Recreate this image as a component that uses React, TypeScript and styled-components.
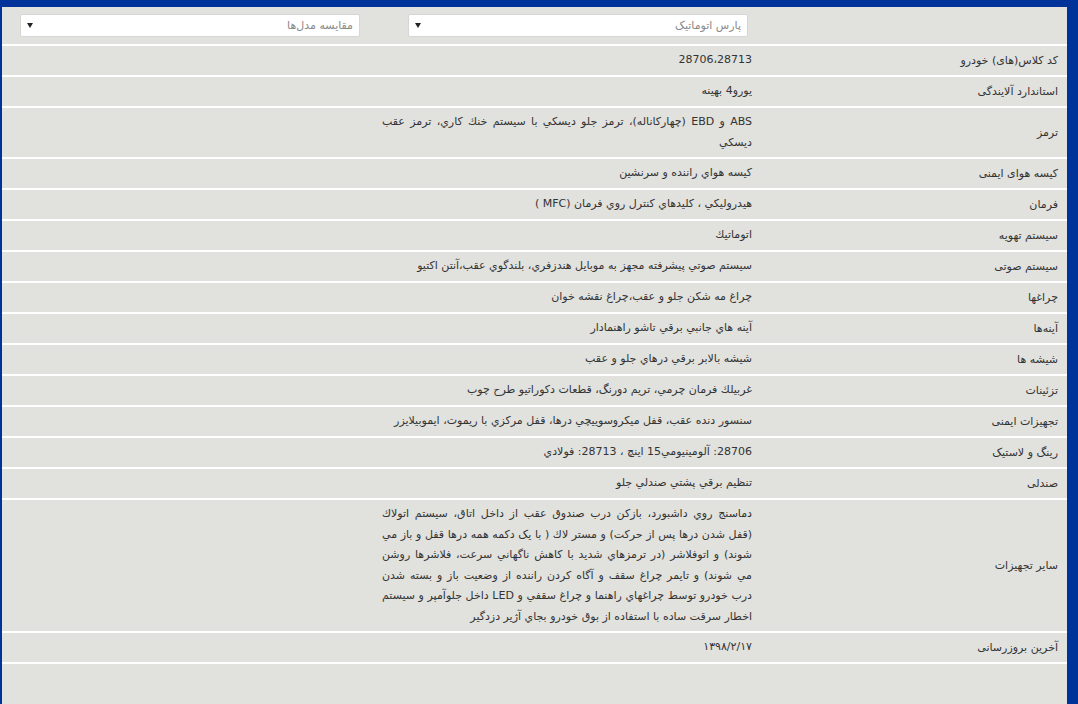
import styled, { createGlobalStyle } from 'styled-components';

const Global = createGlobalStyle`
  html, body { margin: 0; padding: 0; background: #003399; }
  body { font-family: "DejaVu Sans", "Liberation Sans", sans-serif; }
`;

const Frame = styled.div`
  margin: 7px 11px 0 2px;
  background: #e1e1dd;
  height: 697px;
  overflow: hidden;
  direction: rtl;
`;

const Row = styled.div<{ $header?: boolean }>`
  display: grid;
  grid-template-columns: 315px 370px 1fr;
  border-bottom: 2px solid #ffffff;
  min-height: ${p => (p.$header ? '37px' : '29px')};
  font-size: 11px;
  color: #333;
`;

const Label = styled.div`
  display: flex;
  align-items: center;
  padding: 0 9px;
`;

const Value = styled.div`
  padding: 4px 0;
  line-height: 20.5px;
  text-align: justify;
  text-align-last: right;
  display: flex;
  align-items: center;
`;

const SelectCell = styled.div<{ $pad: string }>`
  padding: ${p => p.$pad};
  display: flex;
  align-items: center;
`;

const Select = styled.div<{ $w: number }>`
  width: ${p => p.$w}px;
  height: 23px;
  background: #fff;
  border: 1px solid #d6d6d6;
  border-radius: 2px;
  display: flex;
  align-items: center;
  justify-content: space-between;
  padding: 0 6px;
  box-sizing: border-box;
  color: #8a8a8a;
  font-size: 11px;
`;

const Arrow = styled.span`
  width: 0; height: 0;
  border-left: 3.5px solid transparent;
  border-right: 3.5px solid transparent;
  border-top: 5px solid #222;
`;

const rows: [string, string][] = [
  ['کد کلاس(های) خودرو', '28706،28713'],
  ['استاندارد آلایندگی', 'یورو4 بهینه'],
  ['ترمز', 'ABS و EBD (چهارکاناله)، ترمز جلو ديسكي با سيستم خنك كاري، ترمز عقب ديسكي'],
  ['کیسه هوای ایمنی', 'كيسه هواي راننده و سرنشين'],
  ['فرمان', 'هيدروليكي ، كليدهاي كنترل روي فرمان (MFC )'],
  ['سیستم تهویه', 'اتوماتيك'],
  ['سیستم صوتی', 'سيستم صوتي پيشرفته مجهز به موبايل هندزفري، بلندگوي عقب،آنتن اكتيو'],
  ['چراغها', 'چراغ مه شكن جلو و عقب،چراغ نقشه خوان'],
  ['آینه‌ها', 'آينه هاي جانبي برقي تاشو راهنمادار'],
  ['شیشه ها', 'شيشه بالابر برقي درهاي جلو و عقب'],
  ['تزئینات', 'غربيلك فرمان چرمي، تريم دورنگ، قطعات دكوراتيو طرح چوب'],
  ['تجهیزات ایمنی', 'سنسور دنده عقب، قفل ميكروسوييچي درها، قفل مركزي با ريموت، ايموبيلايزر'],
  ['رینگ و لاستیک', '28706: آلومينيومي15 اينچ ، 28713: فولادي'],
  ['صندلی', 'تنظيم برقي پشتي صندلي جلو'],
  ['سایر تجهیزات', 'دماسنج روي داشبورد، بازكن درب صندوق عقب از داخل اتاق، سيستم اتولاك (قفل شدن درها پس از حركت) و مستر لاك ( با يک دكمه همه درها قفل و باز مي شوند) و اتوفلاشر (در ترمزهاي شديد با كاهش ناگهاني سرعت، فلاشرها روشن مي شوند) و تايمر چراغ سقف و آگاه كردن راننده از وضعيت باز و بسته شدن درب خودرو توسط چراغهاي راهنما و چراغ سقفي و LED داخل جلوآمپر و سيستم اخطار سرقت ساده با استفاده از بوق خودرو بجاي آژير دزدگير'],
  ['آخرین بروزرسانی', '۱۳۹۸/۲/۱۷'],
];

export default function App() {
  return (
    <>
      <Global />
      <Frame>
        <Row $header>
          <div />
          <SelectCell $pad="0 4px 0 0"><Select $w={340}><span>پارس اتوماتیک</span><Arrow /></Select></SelectCell>
          <SelectCell $pad="0 22px 0 0"><Select $w={340}><span>مقایسه مدل‌ها</span><Arrow /></Select></SelectCell>
        </Row>
        {rows.map(([l, v]) => (
          <Row key={l}>
            <Label>{l}</Label>
            <Value><span>{v}</span></Value>
            <div />
          </Row>
        ))}
      </Frame>
    </>
  );
}
